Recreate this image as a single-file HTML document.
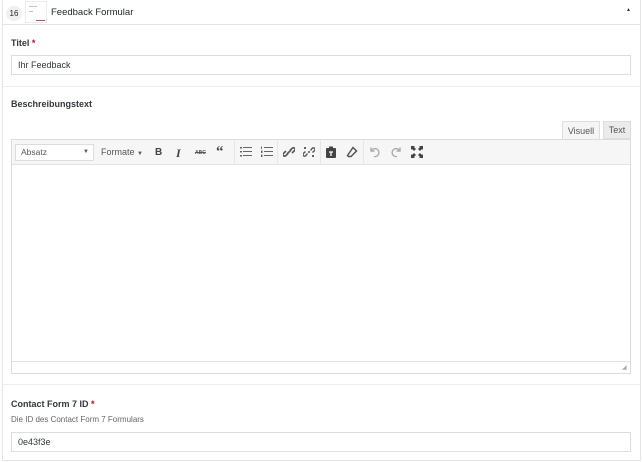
<!DOCTYPE html><html><head><meta charset="utf-8"><style>
*{box-sizing:border-box;margin:0;padding:0}
body{width:642px;height:462px;background:#fff;font-family:"Liberation Sans",sans-serif;color:#23282d;position:relative;overflow:hidden;font-size:9px}
.a{position:absolute}
.box{position:absolute;left:2px;top:0;width:639px;height:461px;border:1px solid #e2e4e7;border-top:none}
.inp{position:absolute;border:1px solid #ddd;background:#fff;font-size:9px;padding-left:6px;line-height:18px;color:#32373c}
.lbl{position:absolute;font-size:9px;font-weight:bold;color:#32373c}
.req{color:#d0021b}
.sep{position:absolute;top:141px;width:1px;height:23px;background:#e6e6e6}
svg.i{position:absolute;top:146px;width:12px;height:12px}
</style></head><body>
<div class="box"></div>
<div class="a" style="left:2px;top:24px;width:639px;height:1px;background:#e2e4e7"></div>
<div class="a" style="left:6px;top:6px;width:16px;height:15px;border-radius:8px;background:#f0f0f0;font-size:8px;text-align:center;line-height:15px">16</div>
<div class="a" style="left:25px;top:1px;width:22px;height:22px;border:1px solid #ececec;background:#fff"><div class="a" style="left:3px;top:4px;width:8px;height:1px;background:#dbb"></div><div class="a" style="left:3px;top:9px;width:4px;height:1px;background:#cbb"></div><div class="a" style="left:10px;top:18px;width:9px;height:1px;background:#a55"></div></div>
<div class="a" style="left:51px;top:7px;font-size:9.5px">Feedback Formular</div>
<div class="a" style="left:626px;top:7px;font-size:5px">▲</div>
<div class="lbl" style="left:11px;top:38px">Titel <span class="req">*</span></div>
<div class="inp" style="left:11px;top:55px;width:620px;height:20px">Ihr Feedback</div>
<div class="a" style="left:3px;top:86px;width:637px;height:1px;background:#eee"></div>
<div class="lbl" style="left:11px;top:99px">Beschreibungstext</div>
<div class="a" style="left:562px;top:121px;width:38px;height:19px;border:1px solid #ddd;border-bottom:none;background:#f5f5f5;font-size:9px;text-align:center;line-height:18px;color:#555">Visuell</div>
<div class="a" style="left:603px;top:121px;width:28px;height:18px;border:1px solid #ddd;background:#ebebeb;font-size:9px;text-align:center;line-height:17px;color:#555">Text</div>
<div class="a" style="left:11px;top:139px;width:620px;height:235px;border:1px solid #dcdcdc"></div>
<div class="a" style="left:12px;top:140px;width:618px;height:25px;background:#f6f6f6;border-bottom:1px solid #e3e3e3"></div>
<div class="a" style="left:15px;top:144px;width:79px;height:17px;border:1px solid #ddd;background:#fff;font-size:8.5px;line-height:15px;padding-left:5px;color:#555">Absatz<span style="position:absolute;right:4px;font-size:6px">▼</span></div>
<div class="a" style="left:101px;top:147px;font-size:9px;color:#555">Formate <span style="font-size:6px">▼</span></div>
<div class="a" style="left:155px;top:147px;font-size:10px;font-weight:bold;color:#444">B</div>
<div class="a" style="left:176px;top:146px;font-size:12px;font-weight:bold;font-style:italic;font-family:'Liberation Serif',serif;color:#444">I</div>
<div class="a" style="left:195px;top:150px;font-size:5px;font-weight:bold;color:#555;text-decoration:line-through">ABC</div>
<div class="a" style="left:216px;top:145px;font-size:15px;font-weight:bold;font-family:'Liberation Serif',serif;color:#444;line-height:15px">“</div>
<div class="sep" style="left:234px"></div>
<svg class="i" style="left:240px" viewBox="0 0 12 12" fill="#666"><rect x="0" y="1" width="2" height="1.5"/><rect x="3" y="1" width="9" height="1"/><rect x="0" y="5" width="2" height="1.5"/><rect x="3" y="5" width="9" height="1"/><rect x="0" y="9" width="2" height="1.5"/><rect x="3" y="9" width="9" height="1"/></svg>
<svg class="i" style="left:261px" viewBox="0 0 12 12" fill="#666"><rect x="0" y="0.5" width="1" height="2.5"/><rect x="3" y="1" width="9" height="1"/><rect x="0" y="4.5" width="1.5" height="2.5"/><rect x="3" y="5" width="9" height="1"/><rect x="0" y="8.5" width="1.5" height="2.5"/><rect x="3" y="9" width="9" height="1"/></svg>
<div class="sep" style="left:277px"></div>
<svg class="i" style="left:283px" viewBox="0 0 12 12" fill="none" stroke="#555" stroke-width="1.6"><path d="M5 7.5L2.8 9.7a1.6 1.6 0 0 1-2.3-2.3L3 5"/><path d="M7 4.5l2.2-2.2a1.6 1.6 0 0 1 2.3 2.3L9 7"/><path d="M4 8l4-4"/></svg>
<svg class="i" style="left:303px" viewBox="0 0 12 12" fill="none" stroke="#555" stroke-width="1.4"><path d="M4.5 7.5L2.8 9.7a1.6 1.6 0 0 1-2.3-2.3L2.5 5.5"/><path d="M7.5 4.5l1.7-2.2a1.6 1.6 0 0 1 2.3 2.3L9.5 6.5"/><path d="M2 1v2M1 2h2M10 9v2M9 10h2M5 6l2 0"/></svg>
<div class="sep" style="left:320px"></div>
<svg class="i" style="left:325px" viewBox="0 0 12 12"><rect x="1" y="2" width="10" height="10" rx="1" fill="#444"/><rect x="4" y="0.5" width="4" height="2.5" fill="#444"/><path d="M4 6h4M6 6v4" stroke="#fff" stroke-width="1.3"/></svg>
<svg class="i" style="left:346px" viewBox="0 0 12 12" fill="none" stroke="#555" stroke-width="1.5"><path d="M7 1.5l3.5 3.5-5.5 5.5H2.5L1.5 9.5z"/></svg>
<div class="sep" style="left:363px"></div>
<svg class="i" style="left:369px" viewBox="0 0 12 12" fill="none" stroke="#aaa" stroke-width="1.4"><path d="M2 1.5v3.5h3.5"/><path d="M2.3 4.8A4 4 0 1 1 5 10.5"/></svg>
<svg class="i" style="left:390px" viewBox="0 0 12 12" fill="none" stroke="#aaa" stroke-width="1.4"><path d="M10 1.5v3.5H6.5"/><path d="M9.7 4.8A4 4 0 1 0 7 10.5"/></svg>
<svg class="i" style="left:411px" viewBox="0 0 12 12" fill="#444"><path d="M0 0h4L3 1l2 2-2 2-2-2-1 1zM12 0v4l-1-1-2 2-2-2 2-2-1-1zM0 12V8l1 1 2-2 2 2-2 2 1 1zM12 12H8l1-1-2-2 2-2 2 2 1-1z"/></svg>
<div class="a" style="left:12px;top:361px;width:618px;height:1px;background:#e3e3e3"></div>
<div class="a" style="left:622px;top:364px;font-size:6px;color:#aaa">◢</div>
<div class="a" style="left:3px;top:384px;width:637px;height:1px;background:#eee"></div>
<div class="lbl" style="left:11px;top:399px">Contact Form 7 ID <span class="req">*</span></div>
<div class="a" style="left:11px;top:415px;font-size:8px;color:#666">Die ID des Contact Form 7 Formulars</div>
<div class="inp" style="left:11px;top:432px;width:620px;height:20px">0e43f3e</div>
</body></html>
